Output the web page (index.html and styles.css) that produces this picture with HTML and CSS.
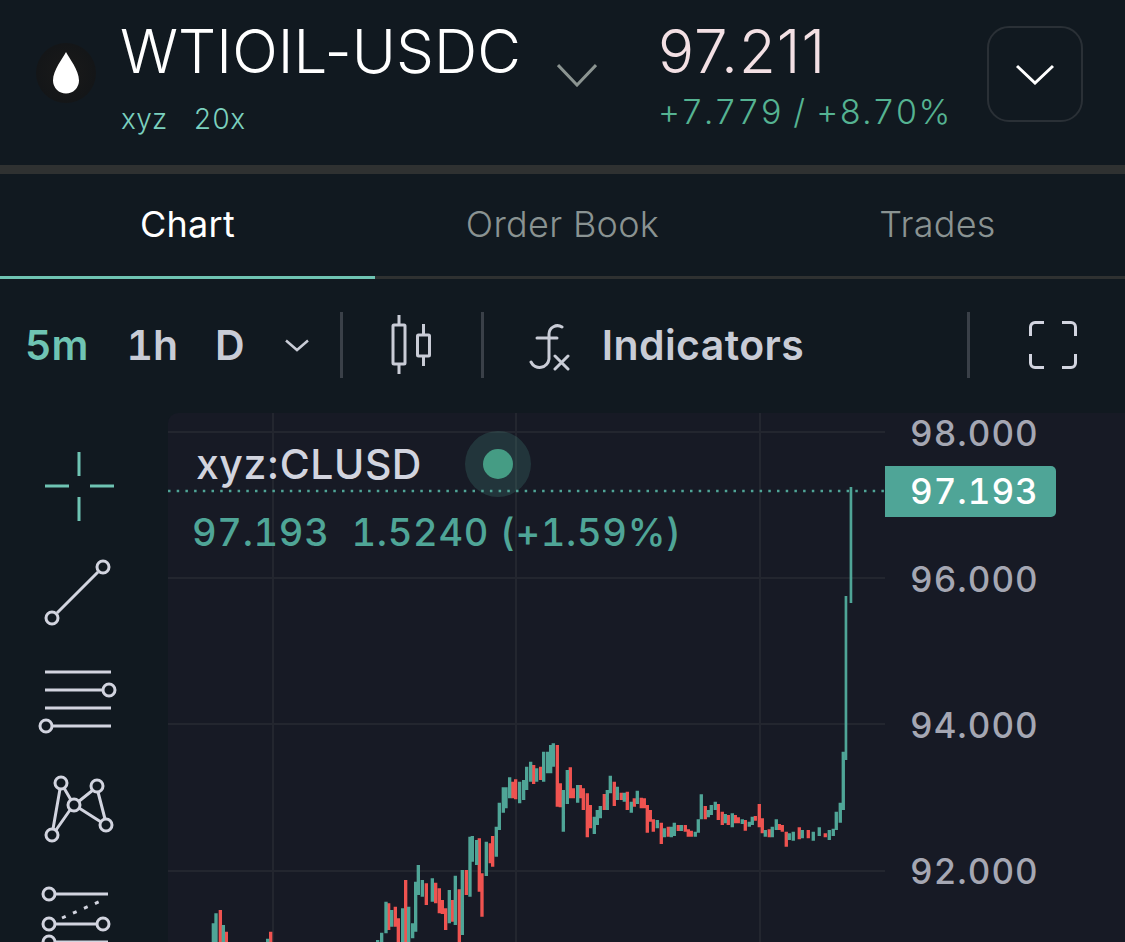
FILE: index.html
```html
<!DOCTYPE html>
<html lang="en">
<head>
<meta charset="utf-8">
<title>WTIOIL-USDC</title>
<link rel="stylesheet" href="styles.css">
</head>
<body>
<header class="market">
  <div class="coin">
    <svg width="26" height="42" viewBox="0 0 26 42"><path fill="#fff" d="M13 0C10 6 0 18 0 28.500A13 13 0 0 0 26 28.500C26 18 16 6 13 0Z"/></svg>
  </div>
  <div class="symbol">
    <div class="symbol-name">WTIOIL-USDC</div>
    <div class="symbol-meta"><span>xyz</span><span>20x</span></div>
  </div>
  <svg class="symbol-chevron" width="40" height="24" viewBox="0 0 40 24"><path fill="none" stroke="#8b9491" stroke-width="3" d="M1 2 20 22 39 2"/></svg>
  <div class="quote">
    <div class="quote-price">97.211</div>
    <div class="quote-change">+7.779 / +8.70%</div>
  </div>
  <button class="more" type="button">
    <svg width="38" height="21" viewBox="0 0 38 21"><path fill="none" stroke="#fff" stroke-width="3" d="M1 2 19 19 37 2"/></svg>
  </button>
</header>

<nav class="tabs">
  <a class="tab active">Chart</a>
  <a class="tab">Order Book</a>
  <a class="tab">Trades</a>
</nav>

<div class="toolbar">
  <span class="interval active">5m</span>
  <span class="interval hour">1h</span>
  <span class="interval day">D</span>
  <svg class="interval-chevron" width="24" height="13" viewBox="0 0 24 13"><path fill="none" stroke="#c9ccd6" stroke-width="2.500" d="M1 1.500 12 11 23 1.500"/></svg>
  <i class="sep sep-a"></i>
  <svg class="candle-icon" width="42" height="60" viewBox="392 314 42 60" fill="none" stroke="#c9ccd6" stroke-width="3">
    <path d="M400 314V324M400 363V373M424.500 323V334M424.500 355V365"/>
    <rect x="394" y="324" width="12" height="39" rx="1"/>
    <rect x="418.500" y="334" width="12" height="21" rx="1"/>
  </svg>
  <i class="sep sep-b"></i>
  <svg class="fx-icon" width="42" height="54" viewBox="530 316 42 54" fill="none" stroke="#c9ccd6" stroke-width="3" stroke-linecap="round">
    <path d="M563 325A8.500 8.500 0 0 0 550 332V357A9.500 9.500 0 0 1 532 360M538 336H558M556 354 569 367M569 354 556 367"/>
  </svg>
  <span class="indicators">Indicators</span>
  <i class="sep sep-c"></i>
  <svg class="full-icon" width="48" height="48" viewBox="0 0 48 48" fill="none" stroke="#d2d4df" stroke-width="3">
    <path d="M1.500 15V6A4.500 4.500 0 0 1 6 1.500H15M33 1.500H42A4.500 4.500 0 0 1 46.500 6V15M46.500 33V42A4.500 4.500 0 0 1 42 46.500H33M15 46.500H6A4.500 4.500 0 0 1 1.500 42V33"/>
  </svg>
</div>

<main class="workspace">
  <aside class="tools">
    <svg viewBox="0 432 158 108" fill="none" stroke="#6fc4b3" stroke-width="3"><path d="M79 452V476M79 497V521M45 486H69M90 486H114"/></svg>
    <svg viewBox="0 540 158 108" fill="none" stroke="#d2d4df" stroke-width="3">
      <path d="M57 613 98 572"/>
      <circle cx="103" cy="567" r="6"/><circle cx="52" cy="618" r="6"/>
    </svg>
    <svg viewBox="0 648 158 108" fill="none" stroke="#d2d4df" stroke-width="3">
      <path d="M45 672H111M45 690H103M45 708H111M52 726H111"/>
      <circle cx="109" cy="690" r="6"/><circle cx="46" cy="726" r="6"/>
    </svg>
    <svg viewBox="0 756 158 108" fill="none" stroke="#d2d4df" stroke-width="3">
      <path d="M60 789 53 829M64 788 71 800M70 810 56 830M78 802 93 790M98 792 105 819M79 808 101 822"/>
      <circle cx="61" cy="783" r="6"/><circle cx="97" cy="786" r="6"/><circle cx="74" cy="805" r="6"/><circle cx="52" cy="835" r="6"/><circle cx="106" cy="825" r="6"/>
    </svg>
    <svg viewBox="0 864 158 108" fill="none" stroke="#d2d4df" stroke-width="3">
      <path d="M56 894H108M56 924H96M56 942H108"/>
      <path d="M62 918 103 900" stroke-dasharray="4 8"/>
      <circle cx="49" cy="894" r="6"/><circle cx="49" cy="924" r="6"/><circle cx="103" cy="924" r="6"/><circle cx="49" cy="942" r="6"/>
    </svg>
  </aside>

  <section class="chart">
    <svg class="plot" viewBox="168 413 957 529" fill="none">
      <path stroke="#23262f" stroke-width="2" d="M168 432H885M168 578H885M168 724H885M168 871H885M273 413V942M516 413V942M760 413V942"/>
      <path stroke="#4fa597" stroke-width="2.500" stroke-dasharray="2.500 6.200" d="M168 491H885"/>
      <circle cx="498" cy="464" r="33" fill="#4fa597" fill-opacity=".2"/>
      <g transform="translate(380 730) scale(.3333)" stroke-width="10">
        <path stroke="#ef5350" d="M-479 540V636M-461 605V636M-328 605V636M26 520V600M46 530V590M55 565V636M77 450V636M139 460V525M167 458V520M178 475V550M187 510V552M197 535V600M217 510V575M238 478V636M259 420V495M298 325V485M306 430V560M331 340V400M338 318V410M398 155V205M407 148V208M461 105V162M482 110V150M532 45V230M541 160V232M571 112V205M580 175V205M601 165V205M610 175V240M622 190V322M631 225V295M673 192V240M703 155V228M724 188V210M742 185V240M763 205V230M784 203V235M793 205V235M802 225V308M811 240V275M820 268V305M844 278V342M865 290V320M895 285V303M916 285V305M925 298V320M934 302V320M976 228V268M1015 222V270M1027 245V285M1045 255V285M1066 255V280M1075 262V280M1096 270V302M1126 258V272M1138 222V292M1147 265V310M1168 298V322M1198 282V300M1207 285V305M1219 305V350M1258 292V328M1285 300V325M1336 310V322"/>
        <path stroke="#4fa597" d="M-500 580V636M-492 550V636M-470 585V636M-337 626V636M-7 630V636M5 608V636M18 515V610M35 540V590M68 535V636M86 530V636M98 580V625M107 455V605M115 405V495M127 450V500M157 445V515M208 480V580M226 437V585M247 420V615M270 320V500M277 318V395M290 330V405M319 335V438M349 290V380M358 218V300M370 172V248M378 172V235M389 142V205M419 155V220M431 150V210M440 110V180M452 95V155M470 115V155M491 65V155M503 65V130M512 45V130M520 40V110M550 180V305M562 120V222M593 165V218M643 260V312M652 240V285M661 228V265M682 180V240M691 137V190M712 170V210M733 188V215M754 215V248M772 182V222M832 270V295M853 295V322M874 290V322M883 278V318M904 285V303M946 305V320M955 268V308M964 193V268M985 240V262M994 225V255M1006 215V240M1036 252V280M1057 250V292M1087 268V282M1108 275V290M1117 260V285M1156 300V320M1177 290V322M1189 268V300M1228 310V330M1240 305V332M1267 300V325M1300 305V332M1318 292V318M1348 300V330M1360 296V318M1369 245V300M1381 218V278M1390 65V240"/>
        <path stroke="#4fa597" stroke-width="8" d="M1398 -402V90M1413 -729V-381"/>
      </g>
    </svg>

    <div class="legend">
      <div class="legend-name">xyz:CLUSD</div>
      <i class="legend-dot"></i>
      <div class="legend-values"><span>97.193</span><span>1.5240 (+1.59%)</span></div>
    </div>

    <span class="tick tick-98">98.000</span>
    <span class="tick tick-96">96.000</span>
    <span class="tick tick-94">94.000</span>
    <span class="tick tick-92">92.000</span>
    <span class="last-price">97.193</span>
  </section>
</main>
</body>
</html>
```

FILE: styles.css
```css
* {
  box-sizing: border-box;
}
html, body {
  height: 100%;
}
body {
  margin: 0;
  overflow: hidden;
  display: flex;
  flex-direction: column;
  background: #111920;
  color: #fff;
  font-family: Inter, "Liberation Sans", sans-serif;
}
.symbol-meta, .quote-change, .toolbar, .legend-values, .tick, .last-price {
  font-variant-numeric: tabular-nums;
}

/* market header */
.market {
  display: flex;
  height: 174px;
  flex: none;
  padding: 0 42px 0 36px;
  border-bottom: 9px solid #2f3131;
}
.coin {
  display: flex;
  align-items: center;
  justify-content: center;
  width: 60px;
  height: 60px;
  margin-top: 43px;
  border-radius: 50%;
  background: radial-gradient(circle, #1a1a1a, #111417);
}
.symbol {
  margin: 16px 0 0 24px;
}
.symbol-name {
  font-size: 60px;
  font-weight: 300;
  line-height: 70px;
  letter-spacing: .1px;
}
.symbol-meta {
  display: flex;
  gap: 26px;
  margin: 17px 0 0 1px;
  color: #7bd0be;
  font-size: 28px;
  line-height: 32px;
  font-weight: 300;
  letter-spacing: .3px;
}
.symbol-chevron {
  margin: 63px 0 0 36px;
}
.quote {
  margin: 16px 0 0 61px;
}
.quote-price {
  color: #f3e0e4;
  font-size: 60px;
  font-weight: 300;
  line-height: 70px;
  letter-spacing: 1px;
}
.quote-change {
  margin-top: 8px;
  color: #55b392;
  font-size: 34px;
  font-weight: 300;
  line-height: 36px;
  letter-spacing: 1px;
}
.more {
  display: flex;
  align-items: center;
  justify-content: center;
  width: 96px;
  height: 96px;
  margin: 26px 0 0 auto;
  padding: 0;
  border: 2px solid #2a3036;
  border-radius: 22px;
  background: none;
}

/* tabs */
.tabs {
  display: grid;
  grid-template-columns: repeat(3, 1fr);
  height: 105px;
  flex: none;
}
.tab {
  display: flex;
  align-items: center;
  justify-content: center;
  padding-bottom: 3px;
  border-bottom: 3px solid #2f3131;
  color: #8a9392;
  font-size: 36px;
  font-weight: 300;
  letter-spacing: .3px;
}
.tab.active {
  border-bottom-color: #6fc4b3;
  color: #fff;
  font-weight: 400;
}

/* toolbar */
.toolbar {
  display: flex;
  align-items: center;
  height: 134px;
  flex: none;
  padding: 0 0 2px 25px;
  color: #c9ccd6;
  font-size: 41px;
  font-weight: 600;
}
.interval.active {
  color: #6fc4b3;
}
.hour {
  margin-left: 38px;
}
.day {
  margin-left: 37px;
}
.interval-chevron {
  margin-left: 40px;
}
.sep {
  width: 3px;
  height: 66px;
  flex: none;
  background: #3a4048;
}
.sep-a {
  margin-left: 31px;
}
.candle-icon {
  margin-left: 48px;
}
.sep-b {
  margin-left: 48px;
}
.fx-icon {
  margin-left: 45px;
}
.indicators {
  margin-left: 31px;
  letter-spacing: .4px;
}
.sep-c {
  margin-left: 163px;
}
.full-icon {
  margin-left: 59px;
}

/* tools and chart */
.workspace {
  display: flex;
  flex: 1;
  min-height: 0;
}
.tools {
  display: flex;
  flex-direction: column;
  width: 168px;
  flex: none;
  padding-top: 19px;
}
.tools svg {
  display: block;
  width: 158px;
  height: 108px;
  flex: none;
}
.chart {
  position: relative;
  flex: 1;
  overflow: hidden;
  border-top-left-radius: 10px;
  background: #171a25;
}
.plot {
  position: absolute;
  left: 0;
  top: 0;
  width: 957px;
  height: 529px;
}
.legend {
  position: absolute;
  left: 28px;
  top: 27px;
  font-weight: 500;
}
.legend-name {
  color: #d2d4df;
  font-size: 41px;
  line-height: 48px;
  letter-spacing: .5px;
}
.legend-dot {
  position: absolute;
  left: 287px;
  top: 9px;
  width: 30px;
  height: 30px;
  border-radius: 50%;
  background: #459c84;
}
.legend-values {
  display: flex;
  gap: 22px;
  margin: 22px 0 0 -4px;
  color: #4fa597;
  font-size: 38px;
  line-height: 44px;
  white-space: nowrap;
  letter-spacing: .7px;
}
.tick, .last-price {
  position: absolute;
  font-size: 35px;
  font-weight: 500;
  line-height: 40px;
  letter-spacing: 1px;
}
.tick {
  left: 742px;
  color: #a5a7b3;
}
.tick-98 {
  top: 0;
}
.tick-96 {
  top: 146px;
}
.tick-94 {
  top: 292px;
}
.tick-92 {
  top: 438px;
}
.last-price {
  left: 717px;
  top: 53px;
  width: 171px;
  height: 51px;
  padding: 5px 0 0 25px;
  border-radius: 0 5px 5px 0;
  background: #4fa597;
  color: #fff;
}
```
